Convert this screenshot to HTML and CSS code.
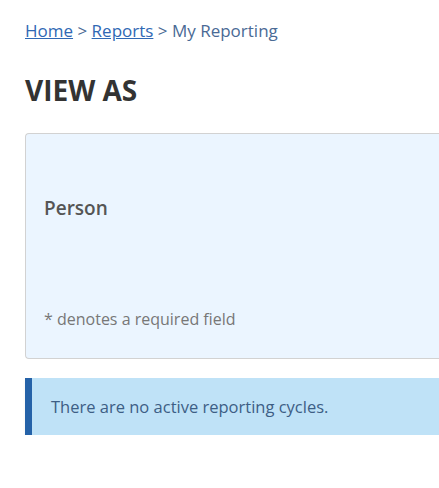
FILE: index.html
```html
<!DOCTYPE html>
<html lang="en">
<head>
  <meta charset="UTF-8">
  <title>My Reporting</title>
  <link rel="stylesheet" href="styles.css">
</head>
<body>
<nav class="breadcrumb">
  <a href="#">Home</a> &gt; <a href="#">Reports</a> &gt; My Reporting
</nav>

<h1 class="page-title">VIEW AS</h1>

<div class="panel">
  <label class="field-label">Person</label>
  <p class="required-note">* denotes a required field</p>
</div>

<div class="alert">
  There are no active reporting cycles.
</div>
</body>
</html>
```

FILE: styles.css
```css
body {
  margin: 0;
  padding: 19px 0 0 25px;

  font-family: 'Open Sans', sans-serif;
  color: #333333;

  -webkit-font-smoothing: antialiased;
}

.breadcrumb {
  font-size: 17px;
  line-height: 24px;
  color: #4a6a95;
}

.breadcrumb a {
  color: #2f68b4;
  text-decoration: underline;
}

.page-title {
  margin: 30px 0 0;
  font-size: 28px;
  line-height: 34px;
  font-weight: 700;
  color: #333333;
}

.panel {
  margin-top: 26px;
  height: 224px;
  padding: 0 0 0 18px;
  background: #ebf5ff;
  border: 1px solid #d2d2d2;
  border-right: 0;
  border-radius: 4px 0 0 4px;
  display: flex;
  flex-direction: column;
}

.field-label {
  margin-top: 61px;
  font-size: 19px;
  line-height: 26px;
  font-weight: 600;
  color: #555555;
}

.required-note {
  margin: auto 0 28px;
  font-size: 16px;
  line-height: 22px;
  color: #777777;
}

.alert {
  margin-top: 19px;
  padding: 0 0 0 19px;
  height: 57px;
  display: flex;
  align-items: center;
  background: #bfe2f7;
  border-left: 7px solid #2562a8;
  box-shadow: 0 2px 3px rgba(0, 0, 0, 0.06);
  font-size: 16.5px;
  color: #3d5e85;
}
```
